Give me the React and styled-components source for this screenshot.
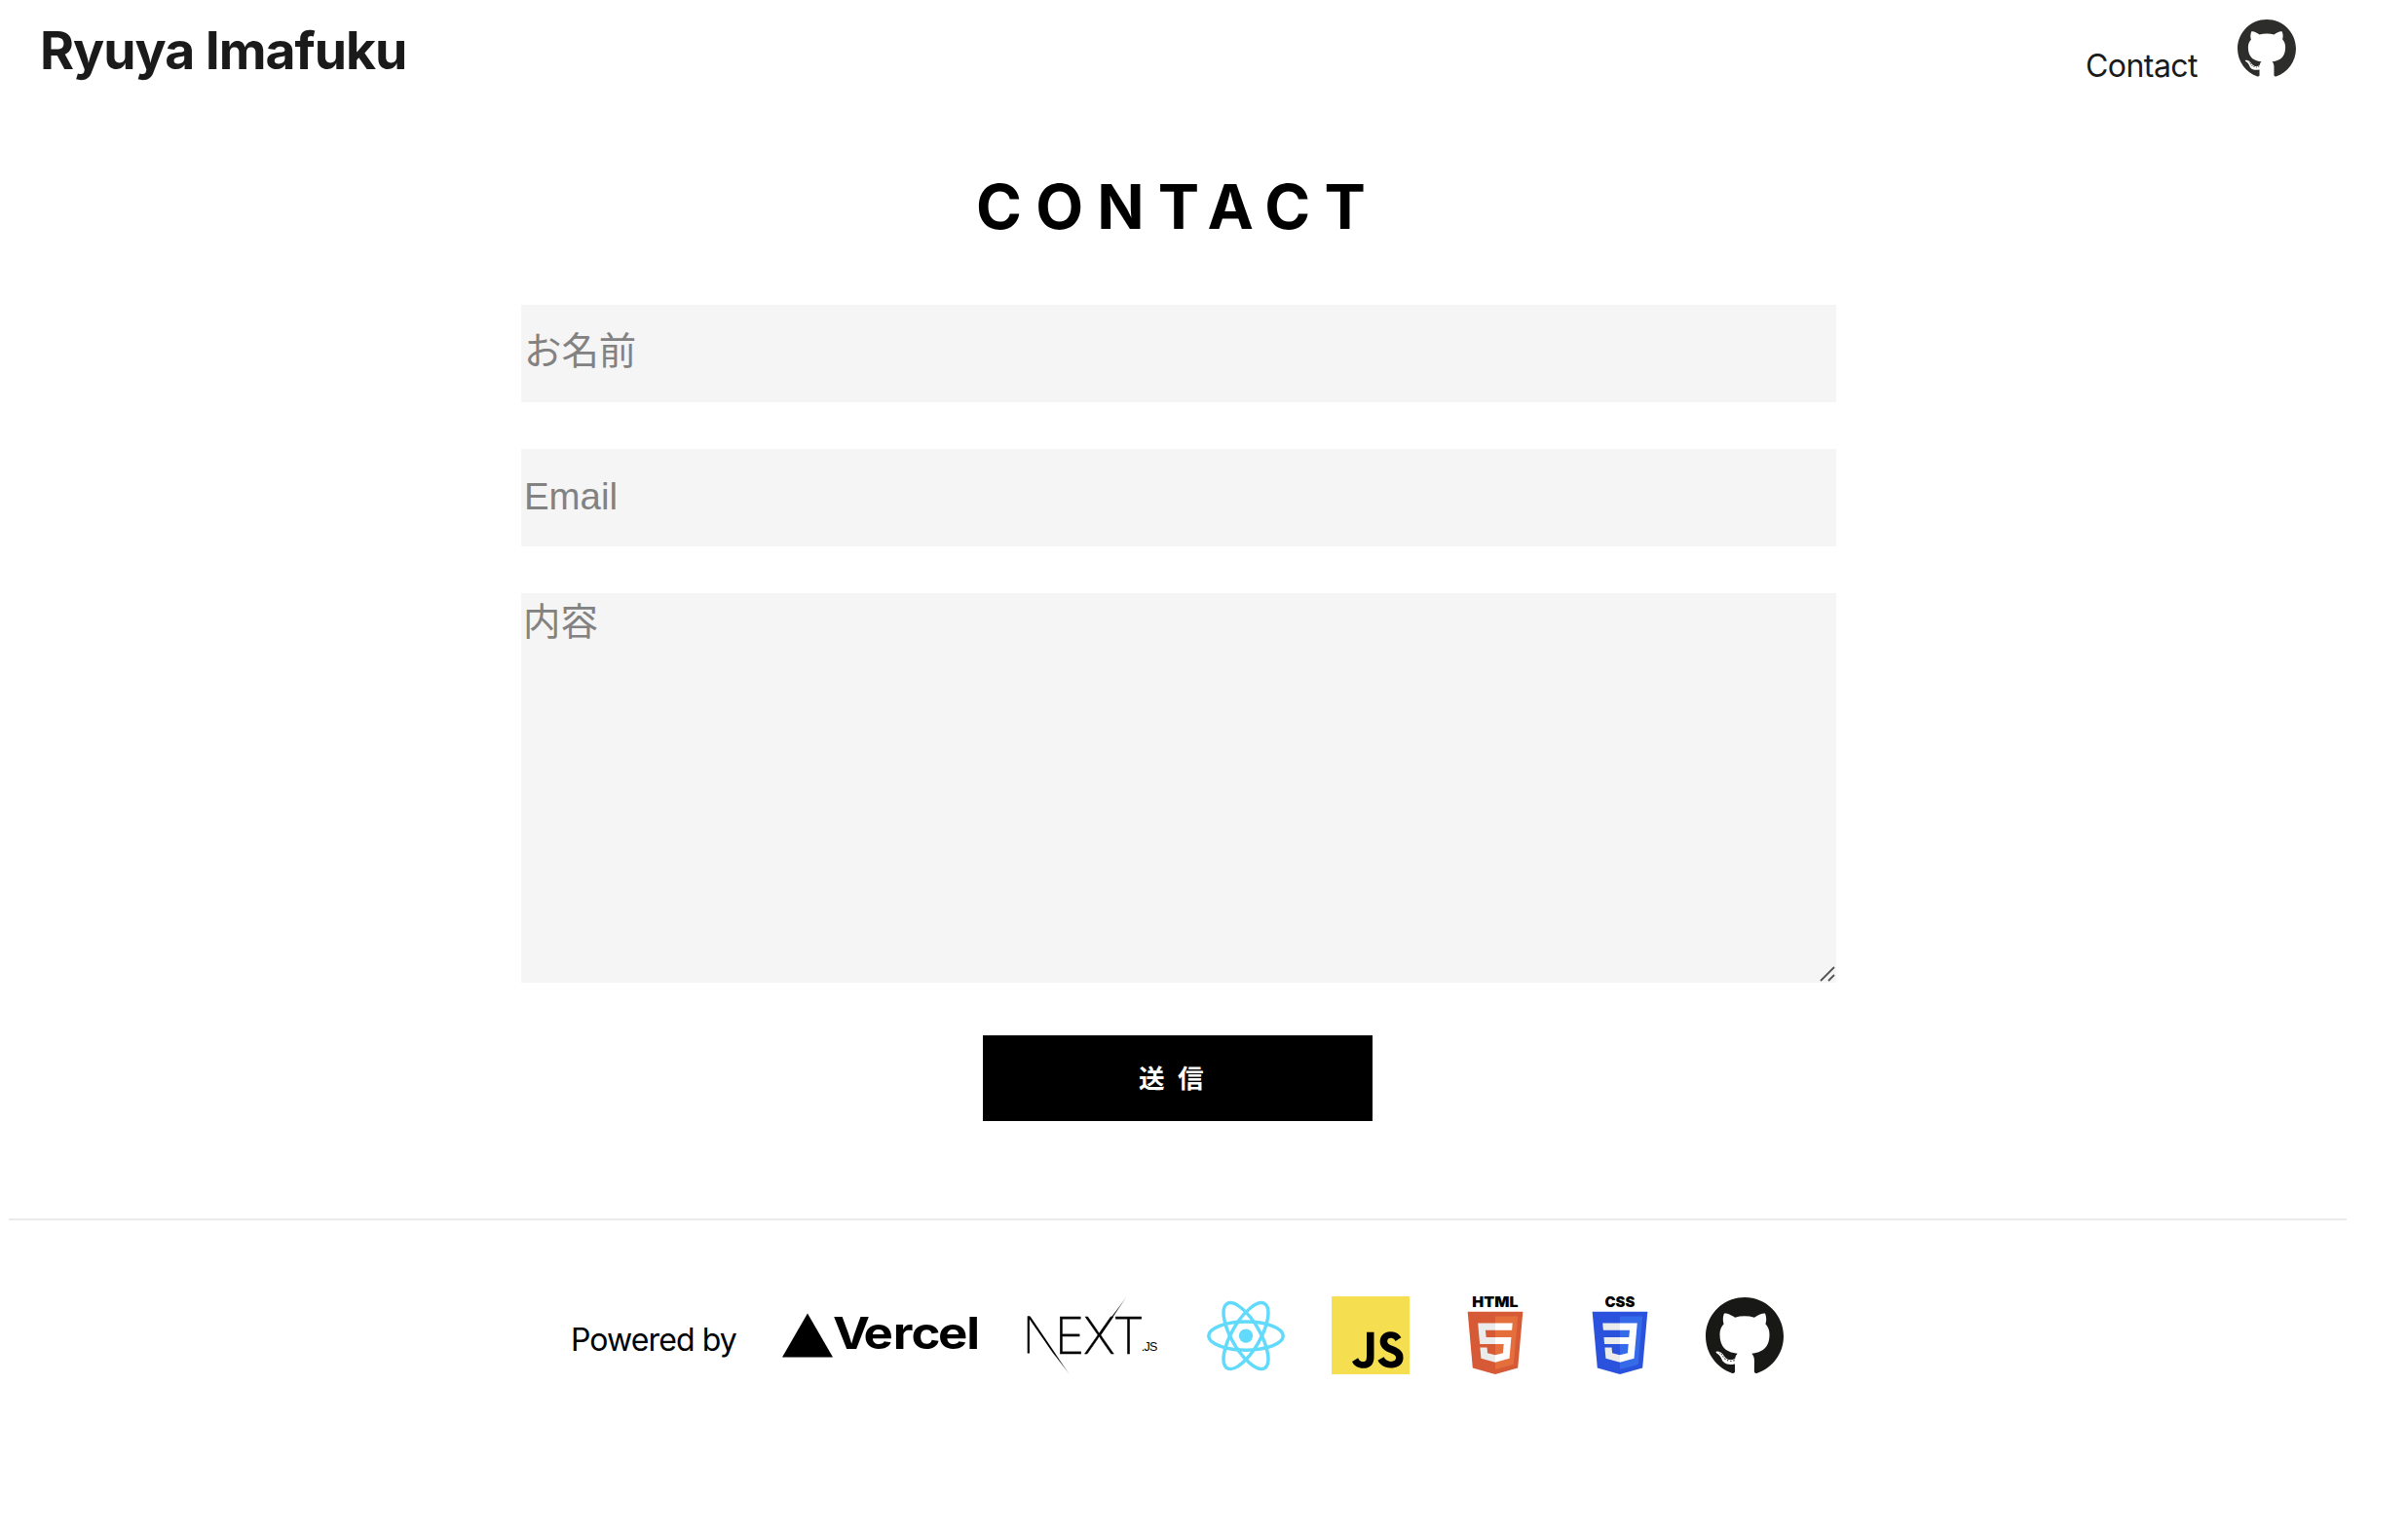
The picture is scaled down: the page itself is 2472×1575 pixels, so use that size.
import React from "react";
import styled, { createGlobalStyle } from "styled-components";
import { SiJavascript } from "react-icons/si";

const GlobalStyle = createGlobalStyle`
  * { box-sizing: border-box; }
  body { margin: 0; background: #fff; color: #000; font-family: Inter, "Noto Sans CJK JP", sans-serif; }
`;

const Page = styled.div`
  width: 2400px;
  height: 1575px;
  margin-left: 9px;
  display: flex;
  flex-direction: column;
`;

const Header = styled.header`
  height: 104px;
  padding: 19px 52px 0 32px;
  display: flex;
  justify-content: space-between;
  align-items: flex-start;
`;

const SiteTitle = styled.h1`
  margin: 0;
  font-size: 53.5px;
  line-height: 66px;
  font-weight: 700;
  letter-spacing: -1.05px;
  color: #1a1a1a;
`;

const Nav = styled.nav`
  display: flex;
  gap: 41px;
`;

const NavLink = styled.a`
  padding-top: 29px;
  font-size: 32px;
  line-height: 40px;
  letter-spacing: -0.55px;
  color: #1a1a1a;
`;

const Mark = styled.svg`
  display: block;
  width: ${(p) => p.$w}px;
  height: ${(p) => p.$h}px;
  margin-top: ${(p) => p.$top || 0}px;
  overflow: visible;
`;

const Main = styled.main`
  display: flex;
  flex-direction: column;
  align-items: center;
  height: 1147px;
`;

const Heading = styled.h2`
  margin: 68px 0 0;
  font-size: 63.5px;
  line-height: 80px;
  font-weight: 700;
  letter-spacing: 14.1px;
`;

const Form = styled.form`
  margin-top: 61px;
  width: 1350px;
  margin-left: 2px;
  display: flex;
  flex-direction: column;
  align-items: center;
`;

const fieldFont = `
  width: 100%;
  border: 0;
  border-radius: 0;
  outline: 0;
  background: #f5f5f5;
  font-family: "Liberation Sans", "Noto Sans CJK JP", sans-serif;
  font-size: 38.4px;
  &::placeholder { color: #828282; opacity: 1; }
`;

const Input = styled.input`
  ${fieldFont}
  height: 100px;
  margin-bottom: 48px;
  padding: 0 3px ${(p) => p.$lift}px;
`;

const TextAreaWrap = styled.div`
  position: relative;
  width: 100%;
  height: 400px;
`;

const TextArea = styled.textarea`
  ${fieldFont}
  display: block;
  height: 100%;
  padding: 7px 2px;
  line-height: 46px;
  resize: none;
`;

const Grip = styled.svg`
  position: absolute;
  right: 1px;
  bottom: 1px;
  width: 16px;
  height: 16px;
`;

const Submit = styled.button`
  width: 400px;
  height: 88px;
  margin: 54px 2px 0 0;
  padding: 0 0 3px;
  border: 0;
  background: #000;
  color: #fff;
  font-family: "Noto Sans CJK JP", sans-serif;
  font-weight: 700;
  font-size: 26.6px;
  letter-spacing: 13.3px;
`;

const Footer = styled.footer`
  border-top: 2px solid #eaeaea;
  padding: 78px 2px 0 0;
  display: flex;
  justify-content: center;
  align-items: flex-start;
`;

const Powered = styled.span`
  width: 218px;
  margin-top: 25px;
  padding-left: 1px;
  font-size: 32px;
  line-height: 40px;
  letter-spacing: -0.9px;
  white-space: nowrap;
`;

const Logos = styled.div`
  display: flex;
  align-items: flex-start;
  gap: 48px;
`;

const JsBox = styled.div`
  width: 80px;
  height: 80px;
  background: #000;
  color: #f5de50;
  svg { display: block; width: 80px; height: 80px; }
`;

function Github({ size, color, top }) {
  return (
    <Mark $w={size} $h={size * 0.975} $top={top} viewBox="3.6 5.1 120.8 117.8" fill={color}>
      <path fillRule="evenodd" clipRule="evenodd" d="M64 5.103c-33.347 0-60.388 27.035-60.388 60.388 0 26.682 17.303 49.317 41.297 57.303 3.017.56 4.125-1.31 4.125-2.905 0-1.44-.056-6.197-.082-11.243-16.8 3.653-20.345-7.125-20.345-7.125-2.747-6.98-6.705-8.836-6.705-8.836-5.48-3.748.413-3.67.413-3.67 6.063.425 9.257 6.223 9.257 6.223 5.386 9.23 14.127 6.562 17.573 5.02.542-3.903 2.107-6.568 3.834-8.076-13.413-1.525-27.514-6.704-27.514-29.843 0-6.593 2.36-11.98 6.223-16.21-.628-1.52-2.695-7.662.584-15.98 0 0 5.07-1.623 16.61 6.19C53.7 35 58.867 34.327 64 34.304c5.13.023 10.3.694 15.127 2.033 11.526-7.813 16.59-6.19 16.59-6.19 3.287 8.317 1.22 14.46.593 15.98 3.872 4.23 6.215 9.617 6.215 16.21 0 23.194-14.127 28.3-27.574 29.796 2.167 1.874 4.097 5.55 4.097 11.183 0 8.08-.07 14.583-.07 16.572 0 1.607 1.088 3.49 4.148 2.897 23.98-7.994 41.263-30.622 41.263-57.294C124.388 32.14 97.35 5.104 64 5.104z" />
      <path d="M26.484 91.806c-.133.3-.605.39-1.035.185-.44-.196-.685-.605-.543-.906.13-.31.603-.395 1.04-.188.44.197.69.61.537.91zm2.446 2.729c-.287.267-.85.143-1.232-.28-.396-.42-.47-.983-.177-1.254.298-.266.844-.14 1.24.28.394.426.472.984.17 1.255zM31.312 98.012c-.37.258-.976.017-1.35-.52-.37-.538-.37-1.183.01-1.44.373-.258.97-.025 1.35.507.368.545.368 1.19-.01 1.452zm3.261 3.361c-.33.365-1.036.267-1.552-.23-.527-.487-.674-1.18-.343-1.544.336-.366 1.045-.264 1.564.23.527.486.686 1.18.333 1.543zm4.5 1.951c-.147.473-.825.688-1.51.486-.683-.207-1.13-.76-.99-1.238.14-.477.823-.7 1.512-.485.683.206 1.13.756.988 1.237zm4.943.361c.017.498-.563.91-1.28.92-.723.017-1.308-.387-1.315-.877 0-.503.568-.91 1.29-.924.717-.013 1.306.387 1.306.88zm4.598-.782c.086.485-.413.984-1.126 1.117-.7.13-1.35-.172-1.44-.653-.086-.498.422-.997 1.122-1.126.714-.123 1.354.17 1.444.663z" />
    </Mark>
  );
}

function Vercel() {
  return (
    <Mark $w={200} $h={46} $top={17} viewBox="0 0 200 46">
      <polygon points="26,0.6 52,45.5 0,45.5" />
      <text transform="scale(1.12 1)" y="36.7" fontFamily="Inter" fontWeight="650" fontSize="45.5" x="46.5 74.6 101.5 118.4 142.8 169">Vercel</text>
    </Mark>
  );
}

function Next() {
  return (
    <Mark $w={140} $h={80} viewBox="-3.8 0 140 80">
      <defs>
        <linearGradient id="fadeDown" x1="0" y1="0" x2="0" y2="1">
          <stop offset="0.6" stopColor="#000" />
          <stop offset="1" stopColor="#000" stopOpacity="0.45" />
        </linearGradient>
        <linearGradient id="fadeUp" x1="0" y1="1" x2="0" y2="0">
          <stop offset="0.4" stopColor="#000" />
          <stop offset="1" stopColor="#000" stopOpacity="0.45" />
        </linearGradient>
      </defs>
      <path d="M1 20.5V58.5" fill="none" stroke="#000" strokeWidth="2.2" />
      <polygon points="0,20.5 2.8,20.5 43,80 26,58" fill="url(#fadeDown)" />
      <text y="58.5" fontFamily="Inter" fontWeight="200" fontSize="52" stroke="#000" strokeWidth="0.3" x="28 57 87.5">EXT</text>
      <polygon points="72,40 102,0 74.5,41" fill="url(#fadeUp)" />
      <text x="117" y="56" fontFamily="Liberation Sans" fontSize="12.5" textLength="16.5">.JS</text>
    </Mark>
  );
}

function ReactLogo() {
  return (
    <Mark $w={80} $h={71.2} $top={4.5} viewBox="-11.5 -10.23 23 20.46">
      <circle r="2.05" fill="#61dafb" />
      <g stroke="#61dafb" fill="none">
        <ellipse rx="11" ry="4.2" />
        <ellipse rx="11" ry="4.2" transform="rotate(60)" />
        <ellipse rx="11" ry="4.2" transform="rotate(120)" />
      </g>
    </Mark>
  );
}

function Shield({ label, dark, light, labelX, labelW, children }) {
  return (
    <Mark $w={80} $h={80} viewBox="0 0 512 512">
      <text x={labelX} y="71" fontFamily="Inter" fontWeight="900" fontSize="96" textLength={labelW} lengthAdjust="spacingAndGlyphs">{label}</text>
      <polygon fill={dark} points="437.367,100.62 404.321,470.819 255.778,512 107.644,470.877 74.633,100.62" />
      <polygon fill={light} points="256,480.523 376.03,447.246 404.27,130.894 256,130.894" />
      {children}
    </Mark>
  );
}

function Html5() {
  return (
    <Shield label="HTML" dark="#d75a36" light="#e56f3c" labelX="104" labelW="302">
      <g fill="#ebebeb">
        <polygon points="256,268.217 195.91,268.217 191.76,221.716 256,221.716 256,176.305 142.132,176.305 143.219,188.488 154.38,313.627 256,313.627" />
        <polygon points="256,386.153 255.801,386.206 205.227,372.55 201.994,336.333 156.409,336.333 162.771,407.634 255.791,433.457 256,433.399" />
      </g>
      <g fill="#fff">
        <polygon points="255.843,268.217 255.843,313.627 311.761,313.627 306.49,372.521 255.843,386.191 255.843,433.435 348.937,407.634 349.62,399.962 360.291,280.411 361.399,268.217" />
        <polygon points="255.843,176.305 255.843,221.716 365.531,221.716 366.442,211.509 369.597,176.305" />
      </g>
    </Shield>
  );
}

function Css3() {
  return (
    <Shield label="CSS" dark="#2a52dd" light="#356be8" labelX="157" labelW="197">
      <g fill="#ebebeb">
        <polygon points="150.31,268.217 154.38,313.627 256,313.627 256,268.217" />
        <polygon points="256,176.305 142.132,176.305 146.26,221.716 256,221.716" />
        <polygon points="256,433.399 256,386.153 255.801,386.206 205.227,372.55 201.994,336.333 156.409,336.333 162.771,407.634 255.791,433.457" />
      </g>
      <polygon fill="#fff" points="255.843,313.627 311.761,313.627 306.49,372.521 255.843,386.191 255.843,433.435 348.937,407.634 349.62,399.962 361.399,268.217 369.597,176.305 255.843,176.305 255.843,221.716 319.831,221.716 315.699,268.217 255.843,268.217" />
    </Shield>
  );
}

export default function App() {
  return (
    <>
      <GlobalStyle />
      <Page>
        <Header>
          <SiteTitle>Ryuya Imafuku</SiteTitle>
          <Nav>
            <NavLink>Contact</NavLink>
            <Github size={60} color="#2d2d2c" top={1} />
          </Nav>
        </Header>
        <Main>
          <Heading>CONTACT</Heading>
          <Form>
            <Input placeholder="お名前" $lift={4} />
            <Input placeholder="Email" $lift={2} />
            <TextAreaWrap>
              <TextArea placeholder="内容" />
              <Grip viewBox="0 0 16 16" stroke="#555" strokeWidth="1.8">
                <path d="M1 15L15 1M9 15L15 9" />
              </Grip>
            </TextAreaWrap>
            <Submit type="button">送信</Submit>
          </Form>
        </Main>
        <Footer>
          <Powered>Powered by</Powered>
          <Logos>
            <Vercel />
            <Next />
            <ReactLogo />
            <JsBox><SiJavascript /></JsBox>
            <Html5 />
            <Css3 />
            <Github size={80} color="#181816" top={1} />
          </Logos>
        </Footer>
      </Page>
    </>
  );
}
